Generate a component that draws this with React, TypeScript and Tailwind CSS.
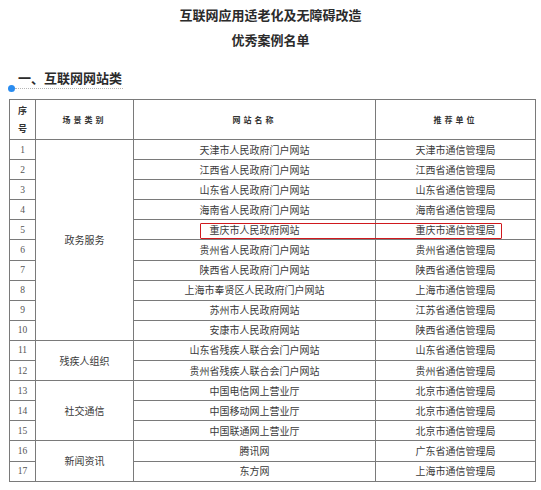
const rows: { n: number; site: string; unit: string }[] = [
  { n: 1, site: '天津市人民政府门户网站', unit: '天津市通信管理局' },
  { n: 2, site: '江西省人民政府门户网站', unit: '江西省通信管理局' },
  { n: 3, site: '山东省人民政府门户网站', unit: '山东省通信管理局' },
  { n: 4, site: '海南省人民政府门户网站', unit: '海南省通信管理局' },
  { n: 5, site: '重庆市人民政府网站', unit: '重庆市通信管理局' },
  { n: 6, site: '贵州省人民政府门户网站', unit: '贵州省通信管理局' },
  { n: 7, site: '陕西省人民政府门户网站', unit: '陕西省通信管理局' },
  { n: 8, site: '上海市奉贤区人民政府门户网站', unit: '上海市通信管理局' },
  { n: 9, site: '苏州市人民政府网站', unit: '江苏省通信管理局' },
  { n: 10, site: '安康市人民政府网站', unit: '陕西省通信管理局' },
  { n: 11, site: '山东省残疾人联合会门户网站', unit: '山东省通信管理局' },
  { n: 12, site: '贵州省残疾人联合会门户网站', unit: '贵州省通信管理局' },
  { n: 13, site: '中国电信网上营业厅', unit: '北京市通信管理局' },
  { n: 14, site: '中国移动网上营业厅', unit: '北京市通信管理局' },
  { n: 15, site: '中国联通网上营业厅', unit: '北京市通信管理局' },
  { n: 16, site: '腾讯网', unit: '广东省通信管理局' },
  { n: 17, site: '东方网', unit: '上海市通信管理局' },
];

// category cell starts at these row numbers, with a rowspan
const groups: Record<number, { name: string; span: number }> = {
  1: { name: '政务服务', span: 10 },
  11: { name: '残疾人组织', span: 2 },
  13: { name: '社交通信', span: 3 },
  16: { name: '新闻资讯', span: 2 },
};

const cjk = 'font-["Noto_Sans_CJK_SC",sans-serif]';
const cell = 'border border-[#7a7a7a] p-0 text-center align-middle';

export default function App() {
  return (
    <div className={`h-[490px] w-[541px] overflow-hidden bg-white text-[#333] ${cjk}`}>
      {/* Title */}
      <div className="pt-[7px] text-center text-[13px] font-bold leading-[16px] text-[#2b2b2b]">
        <div>互联网应用适老化及无障碍改造</div>
        <div className="mt-[9px]">优秀案例名单</div>
      </div>

      {/* Section heading */}
      <div className="mt-[22px] pl-[18px] text-[13px] font-bold leading-[16px] text-[#2b2b2b]">
        一、互联网网站类
      </div>
      <div className="-mt-[1px] flex items-center pl-[8px]">
        <div className="h-[7px] w-[7px] rounded-full bg-[#2a8cf0]" />
        <div className="w-[108px] border-t border-dotted border-[#b5b5b5]" />
      </div>

      {/* Table */}
      <div className="relative ml-[9px] mt-[7px] w-[526px]">
        <table className="w-[526px] table-fixed border-collapse">
          <colgroup>
            <col className="w-[26px]" />
            <col className="w-[98px]" />
            <col className="w-[242px]" />
            <col className="w-[160px]" />
          </colgroup>
          <thead>
            <tr className="h-[40px] text-[8px] font-bold tracking-[3px] text-[#333]">
              <th className={`${cell} tracking-normal`}>
                <div className="text-[9px] leading-[18px]">序</div>
                <div className="text-[9px] leading-[18px]">号</div>
              </th>
              <th className={cell}>场景类别</th>
              <th className={cell}>网站名称</th>
              <th className={cell}>推荐单位</th>
            </tr>
          </thead>
          <tbody className="text-[10px] leading-[12px] text-[#3a3a3a]">
            {rows.map((r) => (
              <tr key={r.n} className="h-[20.1px]">
                <td className={`${cell} font-["Liberation_Serif",serif] text-[9.5px] text-[#555]`}>{r.n}</td>
                {groups[r.n] && (
                  <td className={cell} rowSpan={groups[r.n].span}>
                    {groups[r.n].name}
                  </td>
                )}
                <td className={cell}>{r.site}</td>
                <td className={cell}>{r.unit}</td>
              </tr>
            ))}
          </tbody>
        </table>

        {/* red highlight over row 5 */}
        <div className="absolute left-[191px] top-[124px] h-[16px] w-[302px] rounded-[1px] border-[1.5px] border-[#d0191e]" />
      </div>
    </div>
  );
}
